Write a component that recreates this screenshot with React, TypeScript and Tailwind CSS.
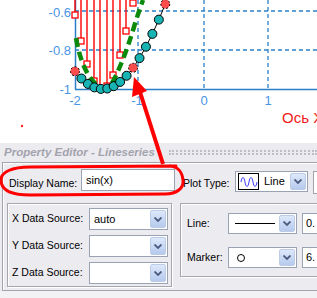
import React from "react";

const F = { fontFamily: '"Liberation Sans", Arial, sans-serif' };

function Chev() {
  return (
    <svg width="8" height="5" viewBox="0 0 8 5">
      <path d="M0.5 0.5 L4 4 L7.5 0.5" fill="none" stroke="#4b5a7e" strokeWidth="1.8" />
    </svg>
  );
}

function Combo({ w, children }: { w: string; children?: React.ReactNode }) {
  return (
    <div className={`${w} shrink-0 h-full bg-white border border-[#9aa3b3] flex items-center`}>
      <div className="flex-1 flex items-center min-w-0 h-full overflow-hidden">{children}</div>
      <div className="w-[16px] shrink-0 h-[calc(100%-2px)] mr-px rounded-[2px] border border-[#bccbe6] bg-gradient-to-b from-[#dde8fa] to-[#b6caee] flex items-center justify-center">
        <Chev />
      </div>
    </div>
  );
}

function Chart() {
  const xs = Array.from({ length: 15 }, (_, i) => -2 + i * 0.1);
  const P = xs.map((x) => [75 + (x + 2) * 64.5, 89 - (Math.sin(x) + 1) * 195]);
  const red = [0, 9, 14];
  const stems = [
    [75, 15], [81, 41], [87, 64], [94, 81], [100, 88], [107, 86], [113, 75], [120, 55], [126, 31], [133, 3],
  ];
  const blue = "#2a80c8";
  const lbl = "#4a95e6";
  return (
    <svg width="317" height="143" viewBox="0 0 317 143" className="block">
      <g stroke={blue} strokeWidth="1.3" strokeDasharray="4 3">
        <line x1="75" y1="11" x2="317" y2="11" />
        <line x1="75" y1="50" x2="317" y2="50" />
        <line x1="138" y1="0" x2="138" y2="89" />
        <line x1="204" y1="0" x2="204" y2="89" />
        <line x1="268" y1="0" x2="268" y2="89" />
      </g>
      <line x1="75.5" y1="0" x2="75.5" y2="89.5" stroke={blue} strokeWidth="1.5" />
      <line x1="75" y1="89.5" x2="317" y2="89.5" stroke={blue} strokeWidth="1.5" />
      <g fill={lbl} fontSize="13" fontFamily='"Liberation Sans", Arial, sans-serif'>
        <text x="71" y="17" textAnchor="end">-0.6</text>
        <text x="71" y="55" textAnchor="end">-0.8</text>
        <text x="71" y="94" textAnchor="end">-1</text>
        <text x="75" y="105" textAnchor="middle">-2</text>
        <text x="137" y="105" textAnchor="middle">-1</text>
        <text x="204" y="105" textAnchor="middle">0</text>
        <text x="268" y="105" textAnchor="middle">1</text>
      </g>
      <text x="282" y="123" fill="#f01818" fontSize="15" fontFamily='"Liberation Sans", Arial, sans-serif'>Ось X</text>
      <circle cx="22" cy="126" r="1.2" fill="#ff2020" />
      <g stroke="#ff0000" strokeWidth="1.4">
        {stems.map(([x, y], i) => (
          <line key={i} x1={x} y1={0} x2={x} y2={y - 3} />
        ))}
      </g>
      <g strokeWidth="1.3">
        {stems.map(([x, y], i) => (
          <rect key={i} x={x - 3} y={y - 3} width="6" height="6" fill="#fff" stroke={i === 4 ? "#30d0e0" : "#ff0000"} />
        ))}
      </g>
      <path
        d="M76 38 C79 55 84 70 92 80 C97 86 101 89 106 88 C112 86 116 76 121 64 C126 52 130 40 134 27 C137 17 140 8 143 0"
        fill="none"
        stroke="#0a8a0a"
        strokeWidth="4.5"
        strokeDasharray="9 5"
      />
      <polyline points={P.map((p) => p.join(",")).join(" ")} fill="none" stroke="#000" strokeWidth="1" />
      {P.map(([x, y], i) =>
        red.includes(i) ? (
          <circle key={i} cx={x} cy={y} r="4.5" fill="#ff4d4d" stroke="#000" strokeWidth="1" strokeDasharray="2 2" />
        ) : (
          <circle key={i} cx={x} cy={y} r="4.5" fill="#18b4b4" stroke="#000" strokeWidth="1" />
        )
      )}
    </svg>
  );
}

export default function App() {
  return (
    <div className="w-[317px] h-[298px] relative overflow-hidden bg-white" style={F}>
      <Chart />
      <div className="h-[155px] bg-[#ecebf0] flex flex-col">
        <div className="h-[19px] flex items-center pl-[4px] gap-[14px] overflow-hidden">
          <span className="shrink-0 text-[11.5px] font-bold italic text-[#a3a3ad] whitespace-nowrap leading-none">
            Property Editor - Lineseries
          </span>
          <div className="flex-1 h-[5px] border-y-2 border-dotted border-[#bdbdc6]" />
        </div>
        <div className="ml-[2px] h-[129px] border-l border-t border-b border-[#a3a3ab] shadow-[inset_1px_1px_0_#fff] flex flex-col text-[10.5px] text-black overflow-hidden">
          <div className="h-[40px] shrink-0 flex items-start pl-[6px] whitespace-nowrap">
            <span className="w-[72px] shrink-0 mt-[13px] leading-[14px]">Display Name:</span>
            <div className="w-[94px] shrink-0 mt-[6px] h-[22px] bg-white border border-[#9aa3b3] flex items-center pl-[4px] text-[11px]">sin(x)</div>
            <span className="ml-[8px] w-[52px] shrink-0 mt-[13px] leading-[14px]">Plot Type:</span>
            <div className="h-[21px] mt-[8px] flex shrink-0">
              <Combo w="w-[73px]">
                <div className="ml-[2px] shrink-0 w-[21px] h-[17px] border border-black bg-white flex items-center justify-center">
                  <svg width="18" height="12" viewBox="0 0 18 12">
                    <path d="M1 6 C2 0 4 0 5 6 C6 12 8 12 9 6 C10 0 12 0 13 6 C14 12 16 12 17 6" fill="none" stroke="#3c3cff" strokeWidth="1" />
                  </svg>
                </div>
                <span className="ml-[5px] text-[11px]">Line</span>
              </Combo>
            </div>
            <div className="ml-[5px] mt-[8px] shrink-0 w-[20px] h-[23px] border border-[#a3a3ab] bg-white" />
          </div>
          <div className="flex pl-[4px] items-start">
            <div className="w-[165px] shrink-0 h-[84px] border border-[#a6a6ae] shadow-[inset_1px_1px_0_#fff,1px_1px_0_#fff] flex flex-col gap-[5px] pt-[4px] pl-[4px]">
              {["X Data Source:", "Y Data Source:", "Z Data Source:"].map((t, i) => (
                <div key={t} className="h-[22px] flex items-center whitespace-nowrap">
                  <span className="w-[77px] shrink-0">{t}</span>
                  <Combo w="w-[79px]">
                    {i === 0 ? <span className="ml-[4px] text-[11px]">auto</span> : null}
                  </Combo>
                </div>
              ))}
            </div>
            <div className="ml-[8px] w-[150px] shrink-0 h-[74px] border border-[#a6a6ae] shadow-[inset_1px_1px_0_#fff,1px_1px_0_#fff] flex flex-col gap-[13px] pt-[9px] pl-[6px]">
              <div className="h-[21px] flex items-center whitespace-nowrap">
                <span className="w-[41px] shrink-0">Line:</span>
                <Combo w="w-[69px]">
                  <div className="ml-[6px] shrink-0 w-[40px] h-px bg-black" />
                </Combo>
                <div className="ml-[5px] shrink-0 w-[40px] h-full bg-white border border-[#9aa3b3] flex items-center pl-[3px] text-[11px]">0.</div>
              </div>
              <div className="h-[21px] flex items-center whitespace-nowrap">
                <span className="w-[41px] shrink-0">Marker:</span>
                <Combo w="w-[69px]">
                  <div className="ml-[8px] shrink-0 w-[8px] h-[8px] rounded-full border border-black" />
                </Combo>
                <div className="ml-[5px] shrink-0 w-[40px] h-full bg-white border border-[#9aa3b3] flex items-center pl-[3px] text-[11px]">6.</div>
              </div>
            </div>
          </div>
        </div>
        <div className="flex-1 bg-[#f2f2f4]" />
      </div>
      <svg className="absolute inset-0 pointer-events-none" width="317" height="298" viewBox="0 0 317 298">
        <path
          d="M176 166 L30 167 C12 167 1 172 1 180 C1 189 10 195 30 195 L165 194 C177 194 184 188 183 180 C182 172 179 167 170 166"
          fill="none"
          stroke="#ff0000"
          strokeWidth="3"
          strokeLinecap="round"
        />
        <line x1="163" y1="164" x2="140" y2="92" stroke="#ff0000" strokeWidth="4" />
        <polygon points="134,77 132,97 147,91" fill="#ff0000" />
      </svg>
    </div>
  );
}
